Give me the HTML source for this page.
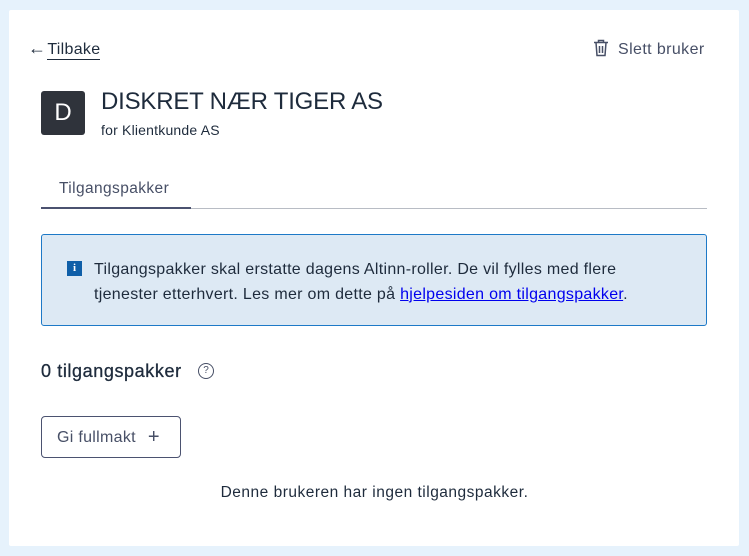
<!DOCTYPE html>
<html><head><style>
body{margin:0;width:749px;height:556px;background:#e6f2fc;font-family:"Liberation Sans",sans-serif;color:#1e2b3c;overflow:hidden;position:relative}
.card{position:absolute;left:9px;top:10px;width:730px;height:536px;background:#fff;border-radius:2px}
.a{position:absolute;white-space:nowrap}
</style></head><body>
<div class="card"></div>
<div class="a" style="left:28px;top:38px;font-size:16px;letter-spacing:0.3px"><span style="font-size:18px">←</span><span style="border-bottom:1.5px solid #1e2b3c;padding-bottom:1px;margin-left:1px">Tilbake</span></div>
<div class="a" style="left:593px;top:39px;font-size:16px;color:#474f66;letter-spacing:0.4px">
<svg width="16" height="18" viewBox="0 0 16 18" style="vertical-align:-3px;margin-right:9px" fill="none" stroke="#474f66" stroke-width="1.5"><path d="M1 3.5h14M5.5 3.5V1.5h5v2M3 3.5l1 13h8l1-13M6.5 7v7M9.5 7v7"/></svg>Slett bruker</div>
<div class="a" style="left:41px;top:91px;width:44px;height:44px;background:#2f333b;border-radius:3px;color:#fff;font-size:24px;text-align:center;line-height:44px">D</div>
<div class="a" style="left:101px;top:88px;font-size:24px;color:#1e2b3c;letter-spacing:-0.2px">DISKRET NÆR TIGER AS</div>
<div class="a" style="left:101px;top:122px;font-size:14px;letter-spacing:0.2px">for Klientkunde AS</div>
<div class="a" style="left:59px;top:180px;font-size:15.5px;color:#474f66;letter-spacing:0.4px">Tilgangspakker</div>
<div class="a" style="left:41px;top:208px;width:666px;height:1px;background:#b8bcc4"></div>
<div class="a" style="left:41px;top:207px;width:150px;height:2px;background:#4b5270"></div>
<div class="a" style="left:41px;top:234px;width:664px;height:90px;background:#dde9f4;border:1px solid #1d79c7;border-radius:3px"></div>
<div class="a" style="left:67px;top:261px;width:15px;height:15px;background:#0f5fa8;color:#fff;font-size:11px;font-weight:bold;text-align:center;line-height:15px;font-family:'Liberation Serif',serif">i</div>
<div class="a" style="left:94px;top:257px;font-size:16px;line-height:25px;letter-spacing:0.3px">Tilgangspakker skal erstatte dagens Altinn-roller. De vil fylles med flere<br>tjenester etterhvert. Les mer om dette på <span style="color:#0000ee;text-decoration:underline">hjelpesiden om tilgangspakker</span>.</div>
<div class="a" style="left:41px;top:361px;font-size:18px;letter-spacing:0.6px;-webkit-text-stroke:0.3px #1e2b3c">0 tilgangspakker</div>
<div class="a" style="left:198px;top:363px;width:14px;height:14px;border:1.3px solid #474f66;border-radius:50%;font-size:10px;text-align:center;line-height:14px;color:#474f66">?</div>
<div class="a" style="left:41px;top:416px;width:138px;height:40px;border:1px solid #4b5270;border-radius:4px;font-size:16px;color:#474f66;line-height:40px"><span style="margin-left:15px;letter-spacing:0.3px">Gi fullmakt</span><span style="font-size:20px;margin-left:12px;vertical-align:-1px">+</span></div>
<div class="a" style="left:0;width:749px;top:484px;text-align:center;font-size:15.5px;letter-spacing:0.5px">Denne brukeren har ingen tilgangspakker.</div>
</body></html>
